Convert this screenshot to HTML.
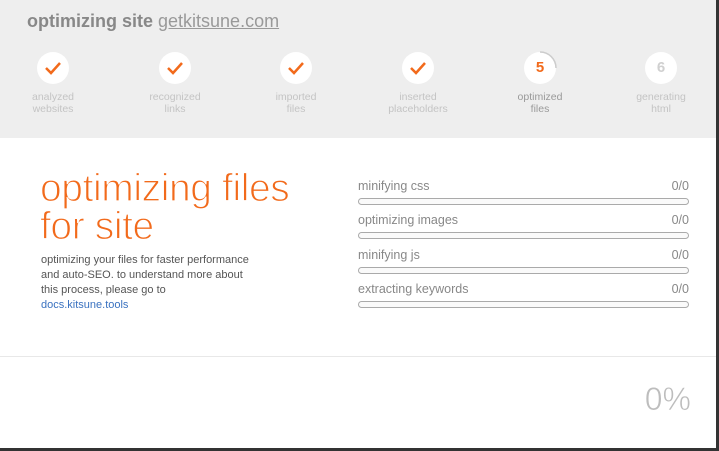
<!DOCTYPE html>
<html><head><meta charset="utf-8"><style>
*{margin:0;padding:0;box-sizing:border-box}
html,body{width:719px;height:451px;overflow:hidden;background:#fff;font-family:"Liberation Sans",sans-serif}
.wrap{position:absolute;left:0;top:0;width:716px;height:448px;background:#fff}
.frameR{position:absolute;left:716px;top:0;width:3px;height:451px;background:#333}
.frameB{position:absolute;left:0;top:448px;width:719px;height:3px;background:#333}
.head{position:absolute;left:0;top:0;width:716px;height:138px;background:#eeeeee}
.title{position:absolute;left:27px;top:11px;font-size:18px;color:#888;font-weight:bold;white-space:nowrap}
.title span{font-weight:normal;text-decoration:underline;color:#999}
.step{position:absolute;top:52px;width:120px;margin-left:-60px;text-align:center}
.c{width:32px;height:32px;border-radius:50%;background:#fff;margin:0 auto;position:relative}
.c svg{position:absolute;left:0;top:0}
.num{font-weight:bold;font-size:15px;line-height:32px;color:#f26a1b}
.lbl{font-size:10.5px;color:#c4c4c4;line-height:12px;margin-top:7px}
.big{position:absolute;left:40px;top:170px;font-size:39px;line-height:38px;letter-spacing:-0.4px;color:#f26a1b;white-space:nowrap;-webkit-text-stroke:1.2px #fff}
.desc{position:absolute;left:41px;top:253px;font-size:11px;line-height:15px;color:#555}
.desc a{color:#3a72c0;text-decoration:none}
.row{position:absolute;left:358px;width:331px}
.row .t{font-size:12.5px;color:#888;display:flex;justify-content:space-between}
.bar{margin-top:5px;height:7px;border:1px solid #aaa;border-radius:4px;background:#fafafa}
.sep{position:absolute;left:0;top:356px;width:716px;height:1px;background:#e8e8e8}
.pct{position:absolute;right:25px;top:381px;font-size:32px;color:#bdbdbd;-webkit-text-stroke:0.6px #fff}
</style></head><body>
<div class="wrap">
<div class="head">
<div class="title">optimizing site <span>getkitsune.com</span></div>
<div class="step" style="left:53px"><div class="c"><svg width="32" height="32"><path d="M9 16 L14 21 L23 11" stroke="#f26a1b" stroke-width="2.5" fill="none"/></svg></div><div class="lbl">analyzed<br>websites</div></div>
<div class="step" style="left:175px"><div class="c"><svg width="32" height="32"><path d="M9 16 L14 21 L23 11" stroke="#f26a1b" stroke-width="2.5" fill="none"/></svg></div><div class="lbl">recognized<br>links</div></div>
<div class="step" style="left:296px"><div class="c"><svg width="32" height="32"><path d="M9 16 L14 21 L23 11" stroke="#f26a1b" stroke-width="2.5" fill="none"/></svg></div><div class="lbl">imported<br>files</div></div>
<div class="step" style="left:418px"><div class="c"><svg width="32" height="32"><path d="M9 16 L14 21 L23 11" stroke="#f26a1b" stroke-width="2.5" fill="none"/></svg></div><div class="lbl">inserted<br>placeholders</div></div>
<div class="step" style="left:540px"><div class="c"><svg width="34" height="34" style="left:-1px;top:-1px"><path d="M17 1 A16 16 0 0 1 33 17" stroke="#ccc" stroke-width="1.5" fill="none"/></svg><div class="num">5</div></div><div class="lbl" style="color:#999">optimized<br>files</div></div>
<div class="step" style="left:661px"><div class="c"><div class="num" style="color:#d0d0d0">6</div></div><div class="lbl">generating<br>html</div></div>
</div>
<div class="big">optimizing files<br>for site</div>
<div class="desc">optimizing your files for faster performance<br>and auto-SEO. to understand more about<br>this process, please go to<br><a>docs.kitsune.tools</a></div>
<div class="row" style="top:179px"><div class="t"><span>minifying css</span><span>0/0</span></div><div class="bar"></div></div>
<div class="row" style="top:213px"><div class="t"><span>optimizing images</span><span>0/0</span></div><div class="bar"></div></div>
<div class="row" style="top:248px"><div class="t"><span>minifying js</span><span>0/0</span></div><div class="bar"></div></div>
<div class="row" style="top:282px"><div class="t"><span>extracting keywords</span><span>0/0</span></div><div class="bar"></div></div>
<div class="sep"></div>
<div class="pct">0%</div>
</div>
<div class="frameR"></div><div class="frameB"></div>
</body></html>
